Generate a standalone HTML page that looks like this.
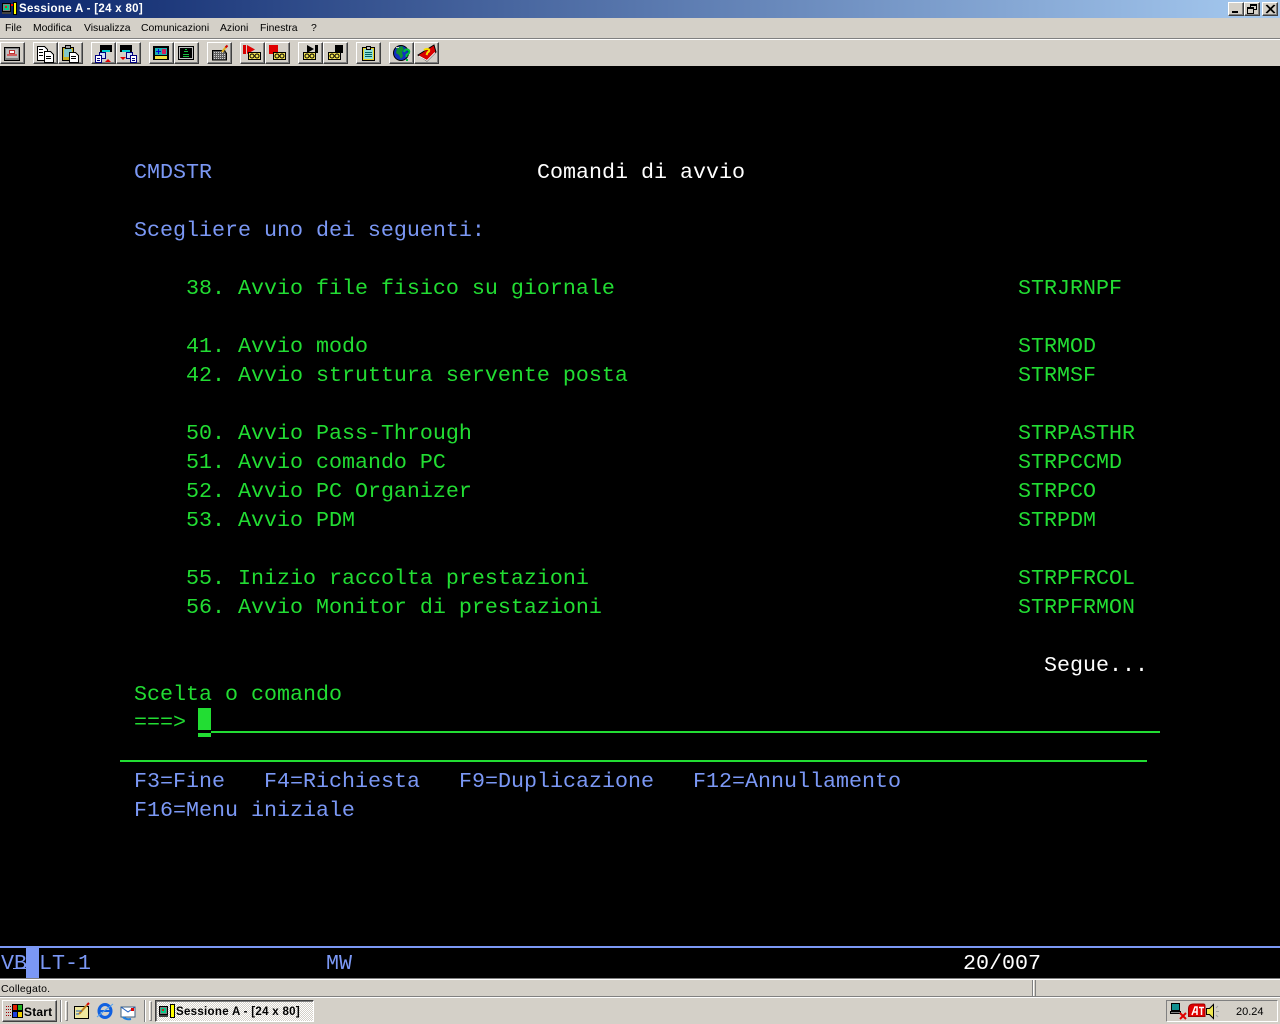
<!DOCTYPE html>
<html><head><meta charset="utf-8"><style>
*{margin:0;padding:0;box-sizing:border-box}
html,body{width:1280px;height:1024px;overflow:hidden;background:#d4d0c8}
body{position:relative;font-family:"Liberation Sans",sans-serif;font-size:11px;color:#000}
.a{position:absolute}
.t{position:absolute;white-space:pre;font-family:"Liberation Mono",monospace;font-size:21.67px;line-height:29px;height:29px}
.s{margin-top:1px}
.g{color:#22dd33}.b{color:#7b98f5}.w{color:#fff}
.m{position:absolute;top:22px;line-height:14px;font-size:10.4px;color:#000;white-space:pre}
.btn{position:absolute;top:42px;height:22px;width:25px;background:#d4d0c8;border:1px solid;border-color:#fff #404040 #404040 #fff;box-shadow:inset -1px -1px 0 #808080}
.wb{position:absolute;top:2px;width:16px;height:14px;background:#d4d0c8;border:1px solid;border-color:#fff #404040 #404040 #fff;box-shadow:inset -1px -1px 0 #808080}
</style></head><body>

<!-- title bar -->
<div class="a" style="left:0;top:0;width:1280px;height:18px;background:linear-gradient(90deg,#0a246a,#a6caf0)"></div>
<svg class="a" style="left:1px;top:1px" width="17" height="16" shape-rendering="crispEdges"><rect x="1.500" y="2.500" width="8" height="8" fill="#808080" stroke="#000"/><rect x="3" y="4" width="5" height="5" fill="#0c8"/><rect x="4" y="5" width="2" height="2" fill="#e02020"/><rect x="1" y="11" width="9" height="2" fill="#404040"/><rect x="12.500" y="1.500" width="3" height="12" fill="#ff0" stroke="#000"/><rect x="10" y="3" width="2" height="2" fill="#f00"/></svg>
<div class="a" style="left:19px;top:2px;color:#fff;font-weight:bold;font-size:11.500px;line-height:14px;white-space:pre;letter-spacing:.3px">Sessione A - [24 x 80]</div>
<div class="wb" style="left:1228px"><div class="a" style="left:3px;top:8px;width:6px;height:2px;background:#000"></div></div>
<div class="wb" style="left:1244px"><div class="a" style="left:5px;top:1px;width:7px;height:6px;border:1px solid #000;border-top-width:2px"></div><div class="a" style="left:2px;top:4px;width:7px;height:7px;border:1px solid #000;border-top-width:2px;background:#d4d0c8"></div></div>
<div class="wb" style="left:1262px"><svg class="a" style="left:2px;top:1px" width="11" height="10"><path d="M1 1L9 9M2 1L10 9M9 1L1 9M10 1L2 9" stroke="#000" stroke-width="1"/></svg></div>

<!-- menu -->
<div class="m" style="left:5px">File</div>
<div class="m" style="left:33px">Modifica</div>
<div class="m" style="left:84px">Visualizza</div>
<div class="m" style="left:141px">Comunicazioni</div>
<div class="m" style="left:220px">Azioni</div>
<div class="m" style="left:260px">Finestra</div>
<div class="m" style="left:311px">?</div>
<div class="a" style="left:0;top:38px;width:1280px;height:1px;background:#808080"></div>
<div class="a" style="left:0;top:39px;width:1280px;height:1px;background:#fff"></div>

<!-- toolbar buttons -->
<div class="btn" style="left:0"></div>
<div class="btn" style="left:33px"></div>
<div class="btn" style="left:58px"></div>
<div class="btn" style="left:91px"></div>
<div class="btn" style="left:116px"></div>
<div class="btn" style="left:149px"></div>
<div class="btn" style="left:174px"></div>
<div class="btn" style="left:207px"></div>
<div class="btn" style="left:240px"></div>
<div class="btn" style="left:265px"></div>
<div class="btn" style="left:298px"></div>
<div class="btn" style="left:323px"></div>
<div class="btn" style="left:356px"></div>
<div class="btn" style="left:389px"></div>
<div class="btn" style="left:414px"></div>

<svg class="a" style="left:0;top:38px" width="445" height="28" shape-rendering="crispEdges">
<!-- 1 screen -->
<rect x="4.500" y="9.500" width="15" height="13" fill="#808080" stroke="#000"/><rect x="6" y="11" width="12" height="9" fill="#c0c0c0"/><rect x="9.500" y="12.500" width="5" height="3" fill="#fff" stroke="#c03030"/><rect x="7" y="16" width="10" height="2" fill="#d06060"/>
<!-- 2 copy -->
<path d="M37.500 8.500h7l3 3v11h-10z" fill="#fff" stroke="#000"/><path d="M44.500 13.500h6l3 3v8h-9z" fill="#fff" stroke="#000"/><path d="M39 11.500h4M39 14.500h4M39 17.500h4M46 18.500h5M46 20.500h5" stroke="#000"/>
<!-- 3 paste -->
<rect x="62.500" y="9.500" width="11" height="13" fill="#c8b020" stroke="#000"/><rect x="65.500" y="7.500" width="5" height="3" fill="#a0a0a0" stroke="#000"/><rect x="64" y="11" width="8" height="8" fill="#80c8c8"/><path d="M69.500 14.500h6l3 3v7h-9z" fill="#fff" stroke="#000"/><path d="M71 18.500h5M71 20.500h5" stroke="#000"/>
<!-- 4 -->
<rect x="100" y="7" width="12" height="7" fill="#000"/><rect x="102" y="12" width="8" height="2" fill="#00d0d0"/><rect x="99.500" y="14.500" width="6" height="6" fill="#d0e0f8" stroke="#000080"/><rect x="95.500" y="17.500" width="6" height="7" fill="#fff" stroke="#000080"/><path d="M97 20.500h3M97 22.500h3" stroke="#000080"/><path d="M105 24h6l-3-3z" fill="#e00000" shape-rendering="auto"/>
<!-- 5 -->
<rect x="120" y="7" width="12" height="7" fill="#000"/><rect x="122" y="12" width="8" height="2" fill="#00d0d0"/><rect x="126.500" y="14.500" width="6" height="6" fill="#d0e0f8" stroke="#000080"/><rect x="130.500" y="17.500" width="6" height="7" fill="#fff" stroke="#000080"/><path d="M132 20.500h3M132 22.500h3" stroke="#000080"/><path d="M120 19h6l-3 3z" fill="#e00000" shape-rendering="auto"/>
<!-- 6 -->
<rect x="153" y="8" width="16" height="14" fill="#000"/><rect x="155" y="10" width="12" height="7" fill="#18b0b0"/><rect x="155" y="18" width="12" height="3" fill="#f0e040"/><path d="M156 13.500h5M158.500 11v5" stroke="#0000e0"/><rect x="162" y="11" width="4" height="5" fill="#d02060"/>
<!-- 7 -->
<rect x="178.500" y="8.500" width="15" height="13" fill="#c0c0c0" stroke="#000"/><rect x="180" y="10" width="12" height="10" fill="#000"/><path d="M183 16.500h6M184 13.500h4M185 11.500h2M183 18.500h6" stroke="#18c040"/>
<!-- 8 keyboard -->
<path d="M212.500 12.500h12l2 3v6.500h-14z" fill="#606060" stroke="#000"/><path d="M214 14.500h10M214 16.500h11M214 18.500h11M214 20.500h11" stroke="#d0d0d0" stroke-dasharray="1 1"/><path d="M222 14l4-5" stroke="#e0b020" stroke-width="2" shape-rendering="auto"/><path d="M225.500 9.500l2-2" stroke="#d00000" stroke-width="2" shape-rendering="auto"/>
<!-- 9 record play -->
<rect x="243" y="7" width="3" height="9" fill="#d80000"/><path d="M247 7l8 4.500-8 4.500z" fill="#e00000" shape-rendering="auto"/><rect x="248.500" y="14.500" width="12" height="7" fill="#f0e050" stroke="#000"/><circle cx="252" cy="18" r="2" fill="none" stroke="#000" shape-rendering="auto"/><circle cx="257" cy="18" r="2" fill="none" stroke="#000" shape-rendering="auto"/>
<!-- 10 record stop -->
<rect x="269" y="7" width="9" height="9" fill="#e00000"/><rect x="273.500" y="14.500" width="12" height="7" fill="#f0e050" stroke="#000"/><circle cx="277" cy="18" r="2" fill="none" stroke="#000" shape-rendering="auto"/><circle cx="282" cy="18" r="2" fill="none" stroke="#000" shape-rendering="auto"/>
<!-- 11 -->
<path d="M307 7l7 4-7 4z" fill="#000" shape-rendering="auto"/><rect x="315" y="7" width="3" height="8" fill="#000"/><rect x="303.500" y="14.500" width="12" height="7" fill="#f0e050" stroke="#000"/><circle cx="307" cy="18" r="2" fill="none" stroke="#000" shape-rendering="auto"/><circle cx="312" cy="18" r="2" fill="none" stroke="#000" shape-rendering="auto"/>
<!-- 12 -->
<rect x="335" y="7" width="8" height="8" fill="#000"/><rect x="328.500" y="14.500" width="12" height="7" fill="#f0e050" stroke="#000"/><circle cx="332" cy="18" r="2" fill="none" stroke="#000" shape-rendering="auto"/><circle cx="337" cy="18" r="2" fill="none" stroke="#000" shape-rendering="auto"/>
<!-- 13 clipboard -->
<rect x="362.500" y="9.500" width="12" height="13" fill="#e8d020" stroke="#000"/><rect x="364" y="11" width="9" height="10" fill="#90e0d8"/><rect x="366.500" y="8.500" width="4" height="3" fill="#c0c0c0" stroke="#000"/><path d="M365 14.500h7M365 16.500h7M365 18.500h7" stroke="#006060"/>
<!-- 14 globe -->
<circle cx="401" cy="15" r="7.500" fill="#1030c0" stroke="#000" shape-rendering="auto"/><path d="M397 10l5-2 2 3-2 3 1 4-2 3-2-4-3-2z" fill="#109030" shape-rendering="auto"/><rect x="396" y="9" width="3" height="1" fill="#d0d0d0"/><path d="M404 14q1-3 3.500-2.500 2.500 .5 1.500 3.500l-2.500 2v2" fill="none" stroke="#00c040" stroke-width="2" shape-rendering="auto"/><rect x="406" y="21" width="2" height="2" fill="#00c040"/>
<!-- 15 book -->
<path d="M418 17L434 7l2 7-9 9z" fill="#d80000" stroke="#000" shape-rendering="auto"/><path d="M419 18l8 4.500 8-8" fill="none" stroke="#fff" shape-rendering="auto"/><path d="M424 12q3-2 5-.5 1 1.500-1.500 3l-1 2.500" fill="none" stroke="#f8e000" stroke-width="2" shape-rendering="auto"/>
</svg>

<!-- terminal -->
<div class="a" style="left:0;top:66px;width:1280px;height:912px;background:#000"></div>
<div class="t s b" style="left:134px;top:157px">CMDSTR</div>
<div class="t s w" style="left:537px;top:157px">Comandi di avvio</div>
<div class="t s b" style="left:134px;top:215px">Scegliere uno dei seguenti:</div>

<div class="t s g" style="left:186px;top:273px">38. Avvio file fisico su giornale</div><div class="t s g" style="left:1018px;top:273px">STRJRNPF</div>
<div class="t s g" style="left:186px;top:331px">41. Avvio modo</div><div class="t s g" style="left:1018px;top:331px">STRMOD</div>
<div class="t s g" style="left:186px;top:360px">42. Avvio struttura servente posta</div><div class="t s g" style="left:1018px;top:360px">STRMSF</div>
<div class="t s g" style="left:186px;top:418px">50. Avvio Pass-Through</div><div class="t s g" style="left:1018px;top:418px">STRPASTHR</div>
<div class="t s g" style="left:186px;top:447px">51. Avvio comando PC</div><div class="t s g" style="left:1018px;top:447px">STRPCCMD</div>
<div class="t s g" style="left:186px;top:476px">52. Avvio PC Organizer</div><div class="t s g" style="left:1018px;top:476px">STRPCO</div>
<div class="t s g" style="left:186px;top:505px">53. Avvio PDM</div><div class="t s g" style="left:1018px;top:505px">STRPDM</div>
<div class="t s g" style="left:186px;top:563px">55. Inizio raccolta prestazioni</div><div class="t s g" style="left:1018px;top:563px">STRPFRCOL</div>
<div class="t s g" style="left:186px;top:592px">56. Avvio Monitor di prestazioni</div><div class="t s g" style="left:1018px;top:592px">STRPFRMON</div>
<div class="t s w" style="left:1044px;top:650px">Segue...</div>
<div class="t s g" style="left:134px;top:679px">Scelta o comando</div>
<div class="t g" style="left:134px;top:708px">===&gt;</div>
<div class="a" style="left:198px;top:708px;width:13px;height:22px;background:#22dd33"></div>
<div class="a" style="left:198px;top:733px;width:13px;height:4px;background:#22dd33"></div>
<div class="a" style="left:211px;top:731px;width:949px;height:2px;background:#22dd33"></div>
<div class="a" style="left:120px;top:760px;width:1027px;height:2px;background:#22dd33"></div>
<div class="t s b" style="left:134px;top:766px">F3=Fine</div>
<div class="t s b" style="left:264px;top:766px">F4=Richiesta</div>
<div class="t s b" style="left:459px;top:766px">F9=Duplicazione</div>
<div class="t s b" style="left:693px;top:766px">F12=Annullamento</div>
<div class="t s b" style="left:134px;top:795px">F16=Menu iniziale</div>

<!-- OIA -->
<div class="a" style="left:0;top:946px;width:1280px;height:2px;background:#7b98f5"></div>
<div class="t b" style="left:1px;top:949px">VB</div>
<div class="a" style="left:13px;top:968px;width:13px;height:1px;background:#7b98f5"></div>
<div class="a" style="left:26px;top:948px;width:13px;height:30px;background:#7b98f5"></div>
<div class="t b" style="left:39px;top:949px">LT-1</div>
<div class="t b" style="left:326px;top:949px">MW</div>
<div class="t w" style="left:963px;top:949px">20/007</div>

<!-- status bar -->
<div class="a" style="left:0;top:978px;width:1280px;height:1px;background:#808080"></div>
<div class="a" style="left:0;top:979px;width:1280px;height:1px;background:#fff"></div>
<div class="a" style="left:1px;top:982px;font-size:10.5px;line-height:14px;letter-spacing:.2px">Collegato.</div>
<div class="a" style="left:1032px;top:980px;width:1px;height:16px;background:#808080"></div>
<div class="a" style="left:1033px;top:980px;width:1px;height:16px;background:#fff"></div>
<div class="a" style="left:1035px;top:980px;width:1px;height:16px;background:#808080"></div>
<div class="a" style="left:0;top:996px;width:1280px;height:1px;background:#808080"></div>
<div class="a" style="left:0;top:997px;width:1280px;height:1px;background:#fff"></div>

<!-- taskbar -->
<div class="a" style="left:2px;top:1000px;width:55px;height:22px;background:#d4d0c8;border:1px solid;border-color:#fff #404040 #404040 #fff;box-shadow:inset -1px -1px 0 #808080"></div>
<svg class="a" style="left:5px;top:1003px" width="19" height="17" shape-rendering="crispEdges"><path d="M7 1h11v14H7z" fill="#000"/><rect x="8" y="2" width="4" height="5" fill="#e02000"/><rect x="13" y="2" width="4" height="5" fill="#20b020"/><rect x="8" y="9" width="4" height="5" fill="#2040e0"/><rect x="13" y="9" width="4" height="5" fill="#f0d000"/><path d="M1 3.500h5M1 6.500h5M1 9.500h5M1 12.500h5" stroke="#a00000" stroke-dasharray="1 1"/></svg>
<div class="a" style="left:24px;top:1005px;font-weight:bold;font-size:12px;line-height:14px;letter-spacing:.2px">Start</div>
<div class="a" style="left:60px;top:1000px;width:2px;height:22px;background:#808080;border-right:1px solid #fff"></div>
<div class="a" style="left:65px;top:1001px;width:3px;height:20px;border:1px solid;border-color:#fff #808080 #808080 #fff"></div>
<svg class="a" style="left:73px;top:1002px" width="66" height="19"><rect x="1.500" y="4.500" width="14" height="12" fill="#f0e8a0" stroke="#000"/><path d="M6 12l8-9" stroke="#c08020" stroke-width="2"/><path d="M14 3l2-2" stroke="#d00" stroke-width="2"/><path d="M3 9h6M3 12h3" stroke="#2060c0"/>
<ellipse cx="32" cy="9" rx="6" ry="6.500" fill="none" stroke="#1060e0" stroke-width="3"/><path d="M26 9h12" stroke="#1060e0" stroke-width="2"/><path d="M24 15Q32 8 40 2" fill="none" stroke="#50a0f0"/>
<rect x="48" y="5" width="14" height="10" fill="#fff" stroke="#406080"/><path d="M48 5l7 5 7-5" fill="none" stroke="#2060c0"/><rect x="58" y="6" width="3" height="3" fill="#e00000"/><path d="M50 15q3 3 8 2" fill="none" stroke="#2080e0" stroke-width="2"/></svg>
<div class="a" style="left:144px;top:1000px;width:2px;height:22px;background:#808080;border-right:1px solid #fff"></div>
<div class="a" style="left:149px;top:1001px;width:3px;height:20px;border:1px solid;border-color:#fff #808080 #808080 #fff"></div>
<div class="a" style="left:155px;top:1000px;width:159px;height:22px;border:1px solid;border-color:#404040 #fff #fff #404040;box-shadow:inset 1px 1px 0 #808080;background-color:#ece9e2;background-image:repeating-conic-gradient(#fff 0 25%,#d4d0c8 0 50%);background-size:2px 2px"></div>
<svg class="a" style="left:159px;top:1004px" width="17" height="16" shape-rendering="crispEdges"><rect x=".500" y="2.500" width="8" height="8" fill="#808080" stroke="#000"/><rect x="2" y="4" width="5" height="5" fill="#0c8"/><rect x="3" y="5" width="2" height="2" fill="#e02020"/><rect x="0" y="11" width="9" height="2" fill="#404040"/><rect x="11.500" y=".500" width="4" height="13" fill="#ff0" stroke="#000"/></svg>
<div class="a" style="left:176px;top:1005px;font-weight:bold;font-size:11.500px;line-height:14px;white-space:pre;letter-spacing:.3px">Sessione A - [24 x 80]</div>

<!-- tray -->
<div class="a" style="left:1166px;top:1000px;width:112px;height:22px;border:1px solid;border-color:#808080 #fff #fff #808080"></div>
<svg class="a" style="left:1170px;top:1003px" width="64" height="17"><rect x="1.500" y=".500" width="8" height="7" fill="#109090" stroke="#000"/><path d="M.5 8.500h10v2H.5z" fill="#808080" stroke="#000"/><path d="M10 10l6 6M16 10l-6 6" stroke="#e00000" stroke-width="2"/>
<path d="M18.500 13.500V6q0-5 5-5h10q1.500 0 1.500 2v10.500z" fill="#e00000" stroke="#a00000"/><path d="M22 12l3-8h2v8M23.500 9h4M29 4.500h5M31.500 4.500V12" fill="none" stroke="#fff" stroke-width="1.500"/>
<path d="M36.500 5.500h3l4-4v14l-4-4h-3z" fill="#f0e850" stroke="#000"/><path d="M48 3l-2 2M46 8.500h3M48 14l-2-2" stroke="#a0a0a0"/></svg>
<div class="a" style="left:1236px;top:1005px;font-size:11px;line-height:14px">20.24</div>

</body></html>
